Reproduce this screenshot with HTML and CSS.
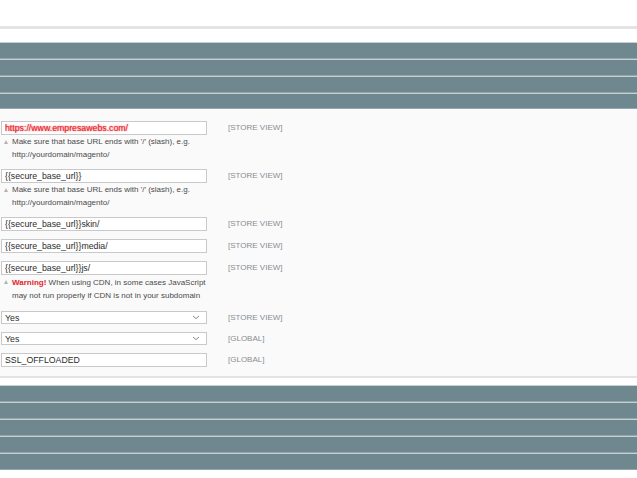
FILE: index.html
```html
<!DOCTYPE html>
<html>
<head>
<meta charset="utf-8">
<link rel="stylesheet" href="styles.css">
</head>
<body>
<div class="prev-fieldset"></div>
<div class="section-bars top-bars">
  <div class="bar"></div>
  <div class="bar"></div>
  <div class="bar"></div>
  <div class="bar"></div>
</div>
<div class="panel">
  <div class="row">
    <div class="field">
      <input class="text highlight" type="text" value="https://www.empresawebs.com/">
      <p class="note"><span class="tri"></span>Make sure that base URL ends with '/' (slash), e.g.<br>http://yourdomain/magento/</p>
    </div>
    <span class="scope">[STORE VIEW]</span>
  </div>
  <div class="row">
    <div class="field">
      <input class="text" type="text" value="{{secure_base_url}}">
      <p class="note"><span class="tri"></span>Make sure that base URL ends with '/' (slash), e.g.<br>http://yourdomain/magento/</p>
    </div>
    <span class="scope">[STORE VIEW]</span>
  </div>
  <div class="row">
    <div class="field">
      <input class="text" type="text" value="{{secure_base_url}}skin/">
    </div>
    <span class="scope">[STORE VIEW]</span>
  </div>
  <div class="row">
    <div class="field">
      <input class="text" type="text" value="{{secure_base_url}}media/">
    </div>
    <span class="scope">[STORE VIEW]</span>
  </div>
  <div class="row">
    <div class="field">
      <input class="text" type="text" value="{{secure_base_url}}js/">
      <p class="note note-warning"><span class="tri"></span><span class="warn">Warning!</span> When using CDN, in some cases JavaScript<br>may not run properly if CDN is not in your subdomain</p>
    </div>
    <span class="scope">[STORE VIEW]</span>
  </div>
  <div class="row">
    <div class="field">
      <div class="select"><span>Yes</span><svg width="8" height="5" viewBox="0 0 8 5"><path d="M1 1l3 2.6L7 1" fill="none" stroke="#8a8a8a" stroke-width="1"/></svg></div>
    </div>
    <span class="scope">[STORE VIEW]</span>
  </div>
  <div class="row">
    <div class="field">
      <div class="select"><span>Yes</span><svg width="8" height="5" viewBox="0 0 8 5"><path d="M1 1l3 2.6L7 1" fill="none" stroke="#8a8a8a" stroke-width="1"/></svg></div>
    </div>
    <span class="scope">[GLOBAL]</span>
  </div>
  <div class="row">
    <div class="field">
      <input class="text" type="text" value="SSL_OFFLOADED">
    </div>
    <span class="scope">[GLOBAL]</span>
  </div>
</div>
<div class="section-bars bottom-bars">
  <div class="bar"></div>
  <div class="bar"></div>
  <div class="bar"></div>
  <div class="bar"></div>
  <div class="bar"></div>
</div>
</body>
</html>
```
FILE: styles.css
```css
html, body {
  margin: 0;
  padding: 0;
  background: #ffffff;
  font-family: "Liberation Sans", Arial, sans-serif;
}

.prev-fieldset {
  height: 26px;
  border-bottom: 3px solid #e4e4e4;
}

.section-bars {
  display: flex;
  flex-direction: column;
}

.top-bars {
  margin-top: 13px;
}

.bottom-bars {
  margin-top: 7px;
}

.bar {
  height: 15px;
  background: #6f8890;
  border-top: 1px solid #c6d0d3;
  border-bottom: 1px solid #93a6ac;
}

.top-bars .bar:last-child {
  height: 14px;
}

.panel {
  background: #fafafa;
  border-bottom: 2px solid #e3e3e3;
  padding: 12px 0 9px 1px;
  display: flex;
  flex-direction: column;
  gap: 8px;
}

.row {
  display: grid;
  grid-template-columns: 206px 1fr;
  column-gap: 21px;
  align-items: start;
}

.field {
  display: flex;
  flex-direction: column;
}

.text {
  box-sizing: border-box;
  width: 206px;
  height: 14px;
  margin: 0;
  padding: 0 3px;
  border: 1px solid #c9c9c9;
  background: #ffffff;
  font-family: "Liberation Sans", Arial, sans-serif;
  font-size: 8.75px;
  color: #2b2b2b;
  outline: none;
}

.highlight {
  color: #e8262c;
  text-shadow: 0 0 1.5px rgba(235, 30, 40, 0.9);
}

.select {
  box-sizing: border-box;
  width: 206px;
  height: 13px;
  border: 1px solid #c9c9c9;
  background: #ffffff;
  display: flex;
  align-items: center;
  justify-content: space-between;
  padding: 0 6px 0 3px;
  font-size: 8.75px;
  color: #2b2b2b;
}

.select svg {
  display: block;
}

.note {
  margin: 0;
  padding-left: 11px;
  position: relative;
  font-size: 8px;
  line-height: 13px;
  color: #4a4a4a;
  white-space: nowrap;
}

.note-warning {
  padding-top: 1px;
  padding-bottom: 1px;
}

.tri {
  position: absolute;
  left: 3px;
  top: 5px;
  width: 0;
  height: 0;
  border-left: 2.5px solid transparent;
  border-right: 2.5px solid transparent;
  border-bottom: 4px solid #b3b3b3;
}

.warn {
  color: #e3222a;
  font-weight: bold;
}

.scope {
  font-size: 8px;
  line-height: 12px;
  padding-top: 1px;
  color: #878e93;
}
```
